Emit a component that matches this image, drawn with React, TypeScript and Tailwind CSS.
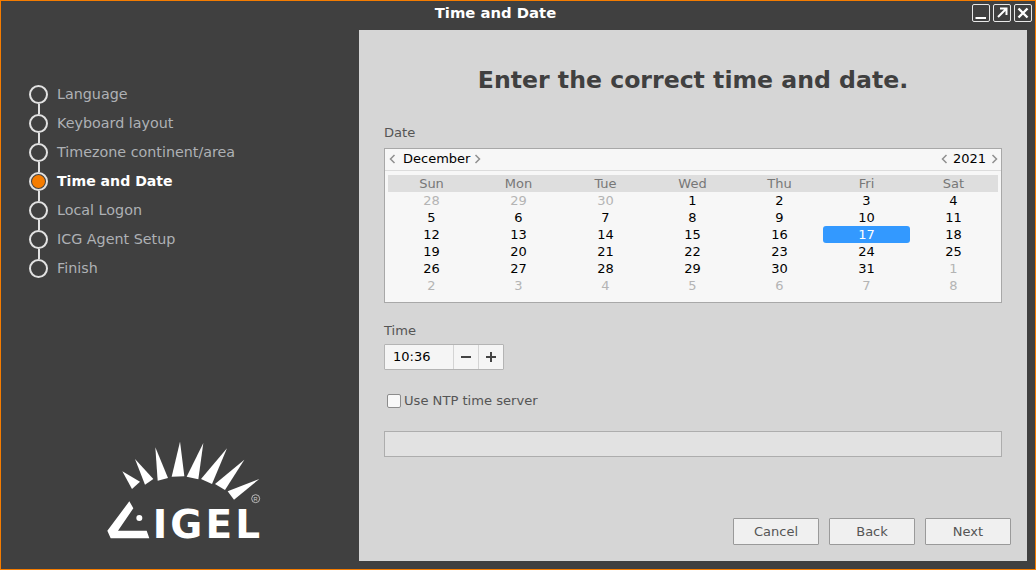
import React from 'react';

const steps = ['Language', 'Keyboard layout', 'Timezone continent/area', 'Time and Date', 'Local Logon', 'ICG Agent Setup', 'Finish'];
const weekdays = ['Sun', 'Mon', 'Tue', 'Wed', 'Thu', 'Fri', 'Sat'];

// [label, belongs to the shown month]
const days: [number, boolean][] = [
  [28, false], [29, false], [30, false], [1, true], [2, true], [3, true], [4, true],
  [5, true], [6, true], [7, true], [8, true], [9, true], [10, true], [11, true],
  [12, true], [13, true], [14, true], [15, true], [16, true], [17, true], [18, true],
  [19, true], [20, true], [21, true], [22, true], [23, true], [24, true], [25, true],
  [26, true], [27, true], [28, true], [29, true], [30, true], [31, true], [1, false],
  [2, false], [3, false], [4, false], [5, false], [6, false], [7, false], [8, false],
];

const Chevron = ({ dir }: { dir: 'left' | 'right' }) => (
  <svg width="7" height="10" viewBox="0 0 7 10" fill="none" stroke="#8f8f8f" strokeWidth="1.5">
    <path d={dir === 'left' ? 'M5.5 1 L1.5 5 L5.5 9' : 'M1.5 1 L5.5 5 L1.5 9'} />
  </svg>
);

const WindowButton = ({ children }: { children: React.ReactNode }) => (
  <div className="w-[18px] h-[18px] border border-[#e8e8e8] rounded-[2px] flex items-center justify-center">
    <svg width="14" height="14" viewBox="0 0 14 14" fill="none" stroke="#fff" strokeWidth="2">
      {children}
    </svg>
  </div>
);

const Logo = () => (
  <svg width="190" height="130" viewBox="0 0 570 390" fill="#fff">
    <polygon points="97,127 126,180 150,158" />
    <polygon points="135,90 165,167 190,150" />
    <polygon points="196,55 203,155 234,147" />
    <polygon points="270,38 245,143 283,142" />
    <polygon points="340,42 290,143 325,151" />
    <polygon points="411,58 333,150 366,165" />
    <polygon points="463,92 375,165 405,183" />
    <polygon points="508,150 413,187 432,212" />
    <path d="M118 217 L52 305 L62 328 L178 328 L170 305 L84 305 L130 238 Z" />
    <circle cx="148" cy="267" r="9" />
    <text x="188" y="328" fontFamily="'DejaVu Sans', sans-serif" fontWeight="700" fontSize="117" textLength="322" lengthAdjust="spacing">IGEL</text>
    <circle cx="497" cy="209" r="12" fill="none" stroke="#d0d0d0" strokeWidth="2.5" />
    <text x="497" y="215" textAnchor="middle" fontFamily="'Liberation Sans', sans-serif" fontSize="17" fill="#d0d0d0">R</text>
  </svg>
);

const FooterButton = ({ label }: { label: string }) => (
  <button className="w-[86px] h-[27px] bg-[#f0f0f0] border border-[#9a9a9a] rounded-[1px] text-[13px] leading-[23px] text-[#555]">{label}</button>
);

export default function App() {
  return (
    <div className="w-[1036px] h-[570px] flex flex-col bg-[#404040] border border-[#f57c00] overflow-hidden font-['DejaVu_Sans',sans-serif]">
      <div className="h-[29px] flex items-start shrink-0">
        <div className="flex-1 pl-[18px] pt-[3px] text-center text-[14.8px] leading-[18px] font-bold text-white">Time and Date</div>
        <div className="flex gap-[3px] pt-[3px] pr-[3px]">
          <WindowButton><path d="M1.5 12 H12" /></WindowButton>
          <WindowButton>
            <path d="M3 11 L11 3 M5 2.5 H11.5 V9" strokeWidth="2" />
          </WindowButton>
          <WindowButton><path d="M2.5 2.5 L11.5 11.5 M11.5 2.5 L2.5 11.5" strokeWidth="2.4" /></WindowButton>
        </div>
      </div>

      <div className="flex-1 flex min-h-0 pb-[8px] pr-[8px]">
        <div className="w-[358px] shrink-0 flex flex-col pl-[28px] pt-[55px] pb-[2px]">
          <div className="flex flex-col">
            {steps.map((step, i) => {
              const active = step === 'Time and Date';
              return (
                <div key={step} className="flex h-[29px]">
                  <div className="w-[19px] flex flex-col items-center">
                    <div className="w-[19px] h-[19px] shrink-0 rounded-full border-2 border-[#e2e2e2] flex items-center justify-center">
                      {active && <div className="w-[13px] h-[13px] rounded-full bg-[#f57c00]" />}
                    </div>
                    {i < steps.length - 1 && <div className="w-[2px] h-[10px] bg-[#e2e2e2]" />}
                  </div>
                  <span className={`ml-[9px] leading-[19px] ${active ? 'text-[14.1px] font-bold text-white' : 'text-[14.3px] text-[#aeb1b5]'}`}>{step}</span>
                </div>
              );
            })}
          </div>
          <div className="mt-auto ml-[61px]">
            <Logo />
          </div>
        </div>

        <div className="flex-1 bg-[#d6d6d6] flex flex-col pl-[25px] pr-[25px]">
          <h1 className="mt-[34px] text-center text-[23.6px] leading-[32px] font-bold text-[#404040]">Enter the correct time and date.</h1>

          <div className="mt-[29px] text-[13.1px] leading-[16px] text-[#555]">Date</div>
          <div className="mt-[7px] h-[155px] bg-[#f7f7f7] border border-[#a8a8a8] flex flex-col">
            <div className="h-[22px] shrink-0 border-b border-[#dcdcdc] flex items-center justify-between pl-[4px] pr-[3px] pb-[2px] text-[13px] text-black">
              <div className="flex items-center">
                <Chevron dir="left" />
                <span className="ml-[7px] mr-[4px]">December</span>
                <Chevron dir="right" />
              </div>
              <div className="flex items-center">
                <Chevron dir="left" />
                <span className="mx-[5px]">2021</span>
                <Chevron dir="right" />
              </div>
            </div>
            <div className="mt-[4px] mx-[3px] h-[17px] bg-[#dedede] grid grid-cols-7 pr-[1px] text-[13px] leading-[17px] text-center text-[#777]">
              {weekdays.map((d) => <div key={d}>{d}</div>)}
            </div>
            <div className="ml-[3px] mr-[4px] grid grid-cols-7 auto-rows-[17px] text-[13px] leading-[17px] text-center">
              {days.map(([day, current], i) => {
                const selected = current && day === 17;
                return (
                  <div
                    key={i}
                    className={selected ? 'bg-[#3399ff] text-white rounded-[3px]' : current ? 'text-black' : 'text-[#b4b4b4]'}
                  >
                    {day}
                  </div>
                );
              })}
            </div>
          </div>

          <div className="mt-[20px] text-[13.1px] leading-[16px] text-[#555]">Time</div>
          <div className="mt-[5px] w-[120px] h-[26px] flex bg-[#f5f5f5] border border-[#b4b4b4] rounded-[1px] text-[13px] text-black">
            <div className="w-[68px] flex items-center pl-[8px]">10:36</div>
            <div className="w-[25px] flex items-center justify-center border-l border-[#d4d4d4]">
              <svg width="12" height="12" viewBox="0 0 12 12" stroke="#444" strokeWidth="2"><path d="M1 6 H11" /></svg>
            </div>
            <div className="flex-1 flex items-center justify-center border-l border-[#d4d4d4]">
              <svg width="12" height="12" viewBox="0 0 12 12" stroke="#444" strokeWidth="2"><path d="M1 6 H11 M6 1 V11" /></svg>
            </div>
          </div>

          <div className="mt-[23px] ml-[3px] flex items-center h-[16px]">
            <div className="w-[14px] h-[14px] bg-[#f8f8f8] border border-[#8c8c8c] rounded-[2px]" />
            <span className="ml-[3px] text-[13.1px] text-[#555]">Use NTP time server</span>
          </div>

          <div className="mt-[22px] h-[26px] bg-[#e2e2e2] border border-[#adadad]" />

          <div className="mt-auto mb-[16px] -mr-[9px] flex justify-end gap-[10px]">
            <FooterButton label="Cancel" />
            <FooterButton label="Back" />
            <FooterButton label="Next" />
          </div>
        </div>
      </div>
    </div>
  );
}
